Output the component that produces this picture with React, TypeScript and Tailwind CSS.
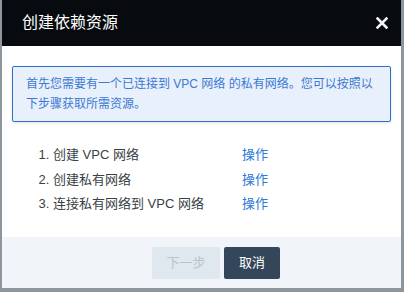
export default function App() {
  const steps = ["创建 VPC 网络", "创建私有网络", "连接私有网络到 VPC 网络"]

  return (
    <div
      className="w-[404px] h-[292px] bg-[#8d959d] overflow-hidden"
      style={{ fontFamily: '"Liberation Sans", "Noto Sans CJK SC", sans-serif' }}
    >
      <div className="ml-[2px] w-[399px] h-[288px] flex flex-col bg-white">
        <div className="h-[46px] bg-[#070a0e] flex items-center justify-between pl-[20px] pr-[13px]">
          <span className="text-white text-[16px]">创建依赖资源</span>
          <svg width="12" height="12" viewBox="0 0 12 12">
            <path d="M1.5 1.5 L10.5 10.5 M10.5 1.5 L1.5 10.5" stroke="#f1f3f5" strokeWidth="2.6" strokeLinecap="square" />
          </svg>
        </div>

        <div className="flex-1 px-[10px] pt-[20px]">
          <div className="border border-[#2f6fcc] bg-[#e8f0fb] rounded-[2px] px-[13px] py-[7px] text-[12px] leading-[20px] text-[#3d78d3] shadow-[0_1px_3px_rgba(0,0,0,0.12)]">
            首先您需要有一个已连接到 VPC 网络 的私有网络。您可以按照以下步骤获取所需资源。
          </div>

          <ol className="list-decimal pl-[41px] mt-[21px] text-[13px] leading-[24.5px] text-[#3a3f45]">
            {steps.map((s) => (
              <li key={s}>
                <div className="flex">
                  <span className="w-[189px]">{s}</span>
                  <span className="text-[#2b78d6]">操作</span>
                </div>
              </li>
            ))}
          </ol>
        </div>

        <div className="h-[51px] bg-[#f1f5f9] flex items-start pt-[10px] pl-[150px] gap-[4px]">
          <button className="w-[68px] h-[32px] rounded-[2px] bg-[#dfe7ef] text-[#b9c3cd] text-[13px]">
            下一步
          </button>
          <button className="w-[56px] h-[32px] rounded-[2px] bg-[#34475a] text-white text-[13px]">
            取消
          </button>
        </div>
      </div>
    </div>
  )
}
